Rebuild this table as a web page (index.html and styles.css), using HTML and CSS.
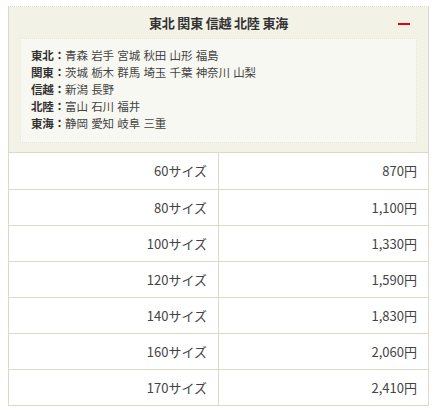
FILE: index.html
```html
<!DOCTYPE html>
<html lang="ja">
<head>
<meta charset="utf-8">
<link rel="stylesheet" href="styles.css">
</head>
<body>
<div class="box">
  <div class="head">
    <div class="title-row">
      <h2 class="title">東北 関東 信越 北陸 東海</h2>
      <span class="toggle"></span>
    </div>
    <div class="areas">
      <p><b>東北：</b>青森 岩手 宮城 秋田 山形 福島</p>
      <p><b>関東：</b>茨城 栃木 群馬 埼玉 千葉 神奈川 山梨</p>
      <p><b>信越：</b>新潟 長野</p>
      <p><b>北陸：</b>富山 石川 福井</p>
      <p><b>東海：</b>静岡 愛知 岐阜 三重</p>
    </div>
  </div>
  <table class="prices">
    <tr><td>60サイズ</td><td>870円</td></tr>
    <tr><td>80サイズ</td><td>1,100円</td></tr>
    <tr><td>100サイズ</td><td>1,330円</td></tr>
    <tr><td>120サイズ</td><td>1,590円</td></tr>
    <tr><td>140サイズ</td><td>1,830円</td></tr>
    <tr><td>160サイズ</td><td>2,060円</td></tr>
    <tr><td>170サイズ</td><td>2,410円</td></tr>
  </table>
</div>
</body>
</html>
```
FILE: styles.css
```css
html, body {
  margin: 0;
  padding: 0;
  background: #fff;
}
body {
  padding: 6px 8px 0 8px;
  font-family: "Noto Sans CJK JP", "Noto Sans", sans-serif;
  color: #333;
}
.box {
  width: 421px;
  border: 1px solid #dcdac6;
  border-top: 1px dotted #dcdac6;
  box-sizing: border-box;
}
.head {
  background: #f3f2e7;
  padding: 0 11px 9px 11px;
  border-bottom: 1px solid #dcdac6;
}
.title-row {
  display: flex;
  align-items: center;
  justify-content: center;
  position: relative;
  height: 31px;
}
.title {
  margin: 0;
  font-size: 13px;
  font-weight: bold;
  line-height: 31px;
  color: #333;
  letter-spacing: -0.2px;
}
.toggle {
  position: absolute;
  right: 7px;
  top: 16px;
  width: 12px;
  height: 2px;
  background: #e60012;
}
.areas {
  background: #f8f8f2;
  border: 1px dotted #e6e4d6;
  padding: 8px 10px 10px 10px;
}
.areas p {
  margin: 0;
  font-size: 11.5px;
  line-height: 17px;
  color: #444;
  letter-spacing: -0.15px;
  word-spacing: 1px;
}
.areas b {
  font-weight: bold;
  color: #333;
}
.prices {
  width: 100%;
  border-collapse: collapse;
  background: #fff;
}
.prices td {
  width: 50%;
  height: 36px;
  box-sizing: border-box;
  padding: 0 11px;
  text-align: right;
  font-size: 13px;
  color: #444;
  border-top: 1px solid #dcdac6;
}
.prices tr:first-child td {
  border-top: none;
}
.prices td:first-child {
  border-right: 1px solid #dcdac6;
}
```
